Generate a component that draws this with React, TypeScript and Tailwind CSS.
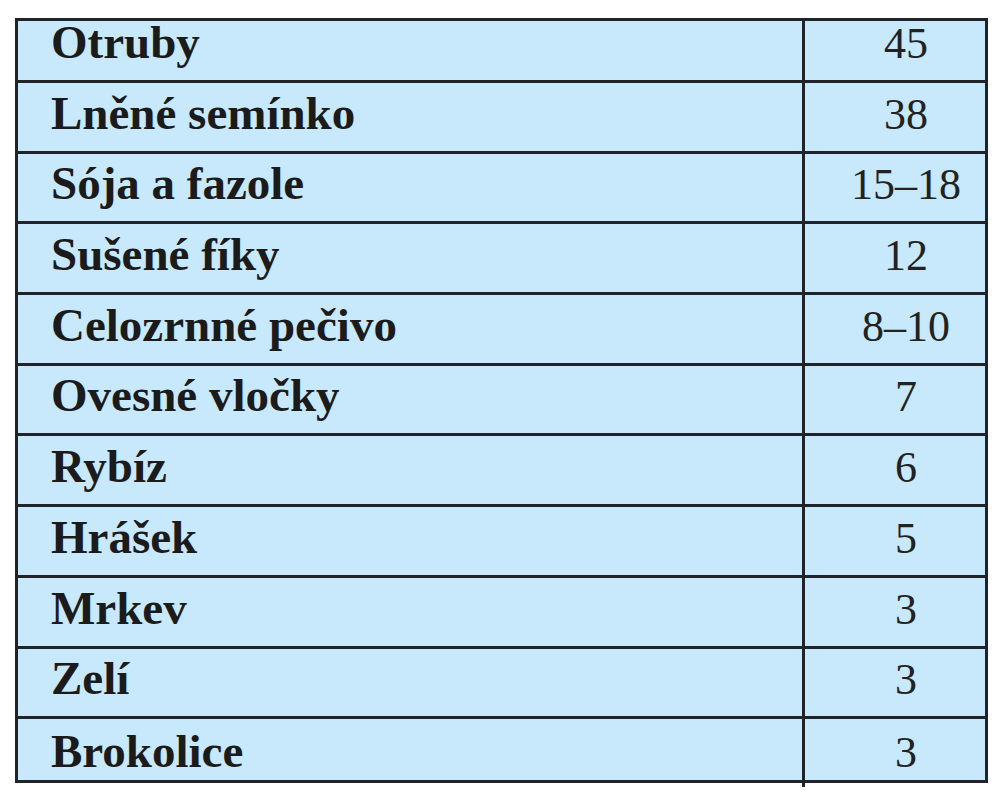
import React from 'react';

interface Row {
  name: string;
  value: string;
}

const rows: Row[] = [
  { name: 'Otruby', value: '45' },
  { name: 'Lněné semínko', value: '38' },
  { name: 'Sója a fazole', value: '15–18' },
  { name: 'Sušené fíky', value: '12' },
  { name: 'Celozrnné pečivo', value: '8–10' },
  { name: 'Ovesné vločky', value: '7' },
  { name: 'Rybíz', value: '6' },
  { name: 'Hrášek', value: '5' },
  { name: 'Mrkev', value: '3' },
  { name: 'Zelí', value: '3' },
  { name: 'Brokolice', value: '3' },
];

export default function App() {
  return (
    <div className="min-h-[800px] w-[1001px] bg-white pt-[18px] pl-[15px]" style={{ fontFamily: '"Liberation Serif", "Times New Roman", serif' }}>
      <div className="w-[973px] border-[3px] border-[#202328] bg-[#c7e9fb]">
        {rows.map((row, i) => {
          const first = i === 0;
          const last = i === rows.length - 1;
          // first and last rows are cut short in the original scan
          const height = first ? 'h-[59px]' : last ? 'h-[64px]' : 'h-[70.7px]';
          const pad = last ? 'pb-[5px]' : 'pb-[14px]';
          return (
            <div key={row.name} className={`flex ${height} ${first ? '' : 'border-t-[3px] border-[#202328]'}`}>
              <div className={`flex w-[784px] items-end pl-[33px] ${pad} text-[47px] font-bold leading-none text-[#1b1b1b]`}>
                {row.name}
              </div>
              <div className={`flex flex-1 items-end justify-center border-l-[3px] border-[#202328] pl-[22px] ${pad} text-[44px] leading-none text-[#222]`}>
                {row.value}
              </div>
            </div>
          );
        })}
      </div>
      <div className="ml-[787px] h-[4px] w-[3px] bg-[#202328]" />
    </div>
  );
}
